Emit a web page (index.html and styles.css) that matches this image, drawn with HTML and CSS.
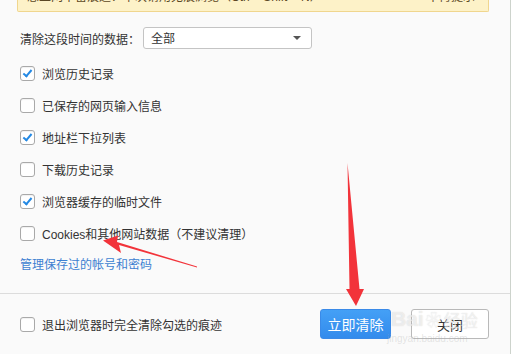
FILE: index.html
```html
<!DOCTYPE html>
<html lang="zh-CN">
<head>
<meta charset="utf-8">
<link rel="stylesheet" href="styles.css">
</head>
<body>
<div class="dialog">
  <div class="banner">
    <span class="banner-text">想上网不留痕迹？下次请用无痕浏览（Ctrl + Shift + N）</span>
    <span class="banner-text">不再提示</span>
  </div>
  <div class="content">
    <div class="range-row">
      <span class="label">清除这段时间的数据：</span>
      <div class="select"><span>全部</span><span class="caret"></span></div>
    </div>
    <div class="options">
      <div class="opt"><span class="box checked"></span><span>浏览历史记录</span></div>
      <div class="opt"><span class="box"></span><span>已保存的网页输入信息</span></div>
      <div class="opt"><span class="box checked"></span><span>地址栏下拉列表</span></div>
      <div class="opt"><span class="box"></span><span>下载历史记录</span></div>
      <div class="opt"><span class="box checked"></span><span>浏览器缓存的临时文件</span></div>
      <div class="opt"><span class="box"></span><span>Cookies和其他网站数据（不建议清理）</span></div>
      <a class="link">管理保存过的帐号和密码</a>
    </div>
  </div>
  <div class="footer">
    <div class="opt"><span class="box"></span><span>退出浏览器时完全清除勾选的痕迹</span></div>
    <div class="buttons">
      <button class="btn primary">立即清除</button>
      <button class="btn">关闭</button>
    </div>
  </div>
</div>
<div class="watermark"><span class="wm-big">Bai</span><span class="wm-paw">&#x2740;</span><span class="wm-cn">经验</span><span class="wm-small">jingyan.baidu.com</span></div>
<svg class="arrows" width="511" height="354" viewBox="0 0 511 354">
  <polygon points="197,267.5 119,245 121,253 103,240.5 118,235.5 117,242 197,266.5" fill="#f2333a"/>
  <polygon points="347.5,163 349.5,289 346,289 356,306 364,289 359.5,289" fill="#f2333a"/>
</svg>
</body>
</html>
```
FILE: styles.css
```css
html, body {
  margin: 0;
  padding: 0;
}
body {
  width: 511px;
  height: 354px;
  overflow: hidden;
  background: #fafafa;
  font-family: "Liberation Sans", "Noto Sans CJK SC", sans-serif;
  font-size: 12px;
  color: #333;
  position: relative;
}
.dialog {
  width: 510px;
  height: 354px;
  border-right: 1px solid #cdd3cc;
  display: flex;
  flex-direction: column;
}
.banner {
  margin: 0 21px 0 17px;
  height: 11px;
  background: #fdf2c8;
  border: 1px solid #f0d68e;
  border-top: none;
  border-radius: 0 0 2px 2px;
  display: flex;
  justify-content: space-between;
  align-items: flex-end;
  padding: 0 13px 0 9px;
  overflow: hidden;
}
.banner-text {
  line-height: 14px;
  margin-bottom: 7px;
  color: #5b4824;
  white-space: nowrap;
}
.content {
  padding: 15px 0 0 20px;
  flex: 1;
}
.range-row {
  display: flex;
  align-items: center;
  height: 22px;
}
.label {
  width: 123px;
}
.select {
  width: 150px;
  height: 20px;
  border: 1px solid #c4c4c4;
  border-radius: 3px;
  background: #fff;
  display: flex;
  align-items: center;
  justify-content: space-between;
  padding: 0 10px 0 7px;
  box-sizing: content-box;
}
.select span:first-child {
  margin-top: -1px;
}
.caret {
  width: 0;
  height: 0;
  border-left: 4px solid transparent;
  border-right: 4px solid transparent;
  border-top: 4px solid #555;
}
.options {
  margin-top: 17px;
  display: flex;
  flex-direction: column;
  gap: 17px;
}
.opt {
  display: flex;
  align-items: center;
  height: 15px;
  gap: 7px;
}
.box {
  width: 13px;
  height: 13px;
  border: 1px solid #a9a9a9;
  border-radius: 3px;
  background: #fff;
  position: relative;
  flex: none;
  box-shadow: inset 0 1px 1px rgba(0,0,0,0.06);
}
.box.checked::after {
  content: "";
  position: absolute;
  left: 4px;
  top: 1px;
  width: 3px;
  height: 7px;
  border-right: 2px solid #2489e4;
  border-bottom: 2px solid #2489e4;
  transform: rotate(40deg);
}
.link {
  color: #3d7fd1;
  line-height: 16px;
  height: 16px;
  margin-top: -1px;
}
.footer {
  height: 61px;
  border-top: 1px solid #dcdcdc;
  display: flex;
  align-items: center;
  justify-content: space-between;
  padding: 0 21px 0 20px;
  box-sizing: border-box;
}
.footer .opt {
  margin-top: 1px;
}
.buttons {
  display: flex;
  gap: 20px;
}
.btn {
  height: 30px;
  width: 78px;
  border: 1px solid #b9b9b9;
  border-radius: 3px;
  background: #fff;
  font-family: "Noto Sans CJK SC", sans-serif;
  font-size: 13px;
  color: #333;
  padding: 0;
}
.btn.primary {
  width: 71px;
  border-color: #3a8ae8;
  background: linear-gradient(#44a0f6, #338bec);
  color: #fff;
  font-size: 14px;
}
.watermark {
  position: absolute;
  left: 391px;
  top: 306px;
  width: 120px;
  height: 46px;
  pointer-events: none;
  font-family: "Liberation Sans", "Noto Sans CJK SC", sans-serif;
  display: flex;
  align-items: center;
  height: 26px;
}
.wm-big {
  font-size: 21px;
  font-weight: bold;
  color: rgba(255,255,255,0.6);
  text-shadow: 0 0 1px rgba(110,110,110,0.3);
}
.wm-paw {
  font-size: 16px;
  color: rgba(255,255,255,0.6);
  text-shadow: 0 0 1px rgba(110,110,110,0.3);
  margin: 0 2px;
}
.wm-cn {
  font-size: 17px;
  color: rgba(255,255,255,0.6);
  text-shadow: 0 0 1px rgba(110,110,110,0.3);
}
.wm-small {
  position: absolute;
  left: -4px;
  top: 27px;
  font-size: 10px;
  color: rgba(170,170,170,0.3);
}
.arrows {
  position: absolute;
  left: 0;
  top: 0;
  pointer-events: none;
}
```
